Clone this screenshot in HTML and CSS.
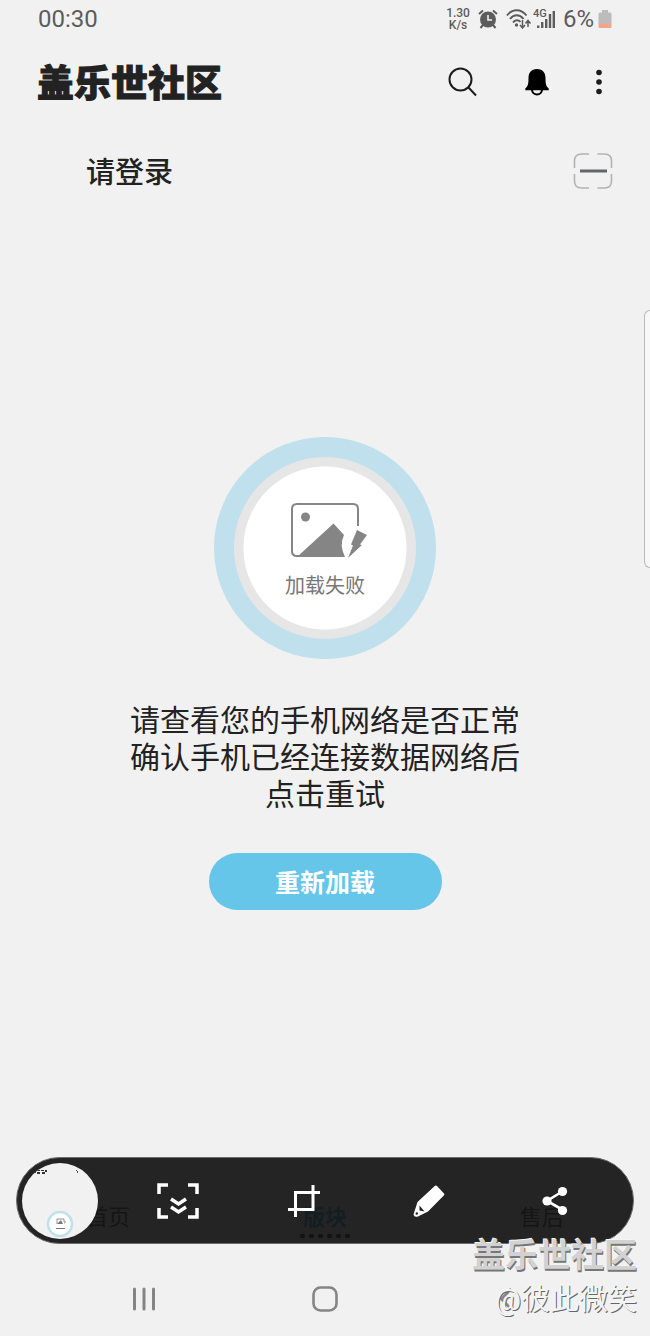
FILE: index.html
```html
<!DOCTYPE html>
<html lang="zh-CN">
<head>
<meta charset="utf-8">
<meta name="viewport" content="width=device-width, initial-scale=1">
<title>盖乐世社区</title>
<link rel="stylesheet" href="styles.css">
</head>
<body>
<div class="screen">
  <div class="status">
    <span class="clock">00:30</span>
    <div class="indicators">
      <span class="speed"><span>1.30</span><span>K/s</span></span>
      <svg class="alarm" width="20" height="20" viewBox="0 0 20 20" fill="none" stroke="#5c5c5c">
        <circle cx="10" cy="10.500" r="8" fill="#5c5c5c" stroke="none"/>
        <path d="M1 5 5 1.500M19 5l-4-3.500M5 16l-2.500 3M15 16l2.500 3" stroke-width="2"/>
        <path d="M10 6v5h4" stroke="#f1f1f1" stroke-width="1.600"/>
      </svg>
      <svg class="wifi" width="26" height="20" viewBox="0 0 26 20" fill="none" stroke="#5c5c5c" stroke-width="2">
        <path d="M1 6.500C6-.5 15-.5 20.500 6.500M4 10c4-5 9.500-5 13.500 0M7 13.500c2-3 5.500-3 7.500-.5"/>
        <circle cx="10.500" cy="16" r="1.700" fill="#5c5c5c" stroke="none"/>
        <path d="M16.500 11v7M14 16l2.500 3 2.500-3M22 18v-6M19.500 14.500 22 11.500l2.500 3" stroke-width="1.500"/>
      </svg>
      <span class="cell">
        <span class="cell-type">4G</span>
        <svg width="22" height="20" viewBox="0 0 22 20" fill="#5c5c5c">
          <path d="M4 16.500h2.400V19H4zM8 13h2.400v6H8zM12 10h2.400v9H12zM15.800 5h2.400v14h-2.400zM19.600 2H22v17h-2.400z"/>
        </svg>
      </span>
      <span class="percent">6%</span>
      <svg width="14" height="20" viewBox="0 0 14 20">
        <path d="M4 1h6v2.500H4zM2 3.500h10q1.500 0 1.500 1.500v10H.5V5Q.5 3.500 2 3.500z" fill="#bcbcbc"/>
        <path d="M.5 14.500h13V18q0 1-1 1h-11q-1 0-1-1z" fill="#f0a58d"/>
      </svg>
    </div>
  </div>

  <header class="header">
    <h1 class="title">盖乐世社区</h1>
    <div class="actions">
      <button class="icon-button" aria-label="搜索">
        <svg width="30" height="30" viewBox="0 0 30 30" fill="none" stroke="#1c1c1c" stroke-width="2">
          <circle cx="12.500" cy="12.500" r="11"/><path d="M20.500 20.500 28 28.500"/>
        </svg>
      </button>
      <button class="icon-button" aria-label="通知">
        <svg width="26" height="30" viewBox="0 0 26 30">
          <circle cx="13" cy="22.500" r="5" fill="none" stroke="#000" stroke-width="2"/>
          <path d="M13 2C7 2 4.500 6 4.500 11c0 6-.5 8-3.200 10.500v1.700h23.400v-1.700C22 19 21.500 17 21.500 11c0-5-2.500-9-8.500-9z" fill="#000"/>
        </svg>
      </button>
      <button class="icon-button" aria-label="更多">
        <svg width="6" height="28" viewBox="0 0 6 28" fill="#1c1c1c">
          <circle cx="3" cy="4.500" r="2.800"/><circle cx="3" cy="14" r="2.800"/><circle cx="3" cy="23.500" r="2.800"/>
        </svg>
      </button>
    </div>
  </header>

  <section class="account">
    <a class="login" href="#login">请登录</a>
    <button class="icon-button" aria-label="扫一扫">
      <svg width="40" height="38" viewBox="0 0 40 38" fill="none" stroke="#b3b3b3" stroke-width="1.600">
        <path d="M1.500 16V9Q1.500 2 8.500 2H16M24.500 2H31.500Q38.500 2 38.500 9v7M38.500 22v7q0 7-7 7h-7M16 36H8.500q-7 0-7-7v-7"/>
        <path d="M7 19h27" stroke="#636568" stroke-width="3"/>
      </svg>
    </button>
  </section>

  <main class="content">
    <div class="badge">
      <svg width="86" height="56" viewBox="-8 0 86 56">
        <path d="M68 24V7q0-5-5-5H7Q2 2 2 7v42q0 5 5 5h3" fill="none" stroke="#858585" stroke-width="2"/>
        <circle cx="15.500" cy="15" r="4.500" fill="#858585"/>
        <path d="M7 55 43.500 21.500 54 33q-5 10 1 22z" fill="#858585"/>
        <path d="M67 28l10 5-7 9.500 2 .5-14 13 5-12.500-2-1z" fill="#858585"/>
      </svg>
      <span class="badge-text">加载失败</span>
    </div>
    <p class="message">请查看您的手机网络是否正常<br>确认手机已经连接数据网络后<br>点击重试</p>
    <button class="reload">重新加载</button>
  </main>

  <div class="bottom">
    <nav class="tabs">
      <a class="tab" href="#home">首页</a>
      <a class="tab active" href="#boards">版块</a>
      <a class="tab" href="#service">售后</a>
    </nav>
    <div class="toolbar">
      <button class="thumb" aria-label="截图预览">
        <svg width="76" height="76" viewBox="0 0 76 76">
          <path d="M12 7h2v3h-2zM15 7h3v1h-3zM15 9h3v2h-3zM19 7h3v1h-3zM20 9h3v2h-3zM23 7h2v2h-2z" fill="#333"/>
          <path d="M54 7l2 2-1 1" fill="none" stroke="#555"/>
          <circle cx="38" cy="61" r="12" fill="#fff" stroke="#bfe0ec" stroke-width="2.500"/>
          <path d="M35 61v-5h7v3" fill="none" stroke="#777" stroke-width=".8"/>
          <path d="M35 61l4-4 2 4zM43 58l1 1-2 2zM34 65h9v1h-9z" fill="#777"/>
        </svg>
      </button>
      <button class="tool" aria-label="滚动截图">
        <svg width="42" height="36" viewBox="0 0 42 36" fill="none" stroke="#fff" stroke-width="3.500">
          <path d="M2 11V2h9M31 2h9v9M40 25v9h-9M11 34H2v-9"/>
          <path d="M14 16l7.500 5 7.500-5M14 24l7.500 5 7.500-5"/>
        </svg>
      </button>
      <button class="tool" aria-label="裁剪">
        <svg width="32" height="32" viewBox="0 0 32 32" fill="none" stroke="#fff" stroke-width="3">
          <path d="M0 24.500h25V0M32 7.500H7.500V32"/>
        </svg>
      </button>
      <button class="tool" aria-label="涂鸦">
        <svg width="32" height="32" viewBox="0 0 32 32">
          <path d="M22 .8q1-.8 2 .2l7 7.500q.8 1-.2 2L15 26.500 5 31.500q-4 1-4.500-2L4.500 17z" fill="#fff"/>
          <path d="M6.500 20.500l5 6-5-1z" fill="#242424"/><circle cx="3.800" cy="28.500" r="1.200" fill="#242424"/>
        </svg>
      </button>
      <button class="tool" aria-label="分享">
        <svg width="26" height="30" viewBox="0 0 26 30" fill="#fff">
          <path d="M21 5 5 15l16 9" fill="none" stroke="#fff" stroke-width="2.600"/>
          <circle cx="20.500" cy="5.500" r="4.600"/><circle cx="5" cy="15" r="4.600"/><circle cx="20.500" cy="24.500" r="4.600"/>
        </svg>
      </button>
    </div>
  </div>

  <div class="system-nav">
    <button class="nav-key" aria-label="最近任务">
      <svg width="24" height="24" viewBox="0 0 24 24" stroke="#858585" stroke-width="3" stroke-linecap="round">
        <path d="M2.500 2v20M12 2v20M21.500 2v20"/>
      </svg>
    </button>
    <button class="nav-key" aria-label="主屏幕">
      <svg width="26" height="26" viewBox="0 0 26 26" fill="none" stroke="#858585" stroke-width="2.600">
        <rect x="1.500" y="1.500" width="23" height="23" rx="7"/>
      </svg>
    </button>
    <button class="nav-key" aria-label="返回">
      <svg width="14" height="24" viewBox="0 0 14 24" fill="none" stroke="#858585" stroke-width="2.600">
        <path d="M12 2 2.500 12 12 22"/>
      </svg>
    </button>
  </div>

  <div class="edge-handle"></div>
  <div class="watermark">
    <span class="mark-name">盖乐世社区</span>
    <span class="mark-user">@彼此微笑</span>
  </div>
</div>
</body>
</html>
```

FILE: styles.css
```css
* {
  box-sizing: border-box;
}

body {
  margin: 0;
  background: #f1f1f1;
  color: #222;
  font-family: Roboto, "Noto Sans CJK SC", sans-serif;
}

button {
  display: flex;
  align-items: center;
  justify-content: center;
  margin: 0;
  padding: 0;
  border: 0;
  background: none;
  font-family: inherit;
  cursor: pointer;
}

svg {
  display: block;
  flex: none;
}

a {
  color: inherit;
  text-decoration: none;
}

.screen {
  position: relative;
  display: flex;
  flex-direction: column;
  min-height: 100vh;
  overflow: hidden;
}

.status {
  display: flex;
  align-items: center;
  justify-content: space-between;
  height: 38px;
  padding: 0 38px;
  color: #5c5c5c;
}

.clock {
  font-size: 24px;
}

.indicators {
  display: flex;
  align-items: center;
}

.speed {
  display: flex;
  flex-direction: column;
  align-items: center;
  margin-right: 8px;
  font-size: 12px;
  font-weight: 500;
  line-height: 12px;
}

.alarm {
  margin-right: 8px;
}

.wifi {
  margin-right: 1px;
}

.cell {
  position: relative;
  margin-right: 8px;
}

.cell-type {
  position: absolute;
  top: -1px;
  left: 0;
  font-size: 11px;
  font-weight: 500;
  line-height: 12px;
}

.percent {
  margin-right: 4px;
  font-size: 24px;
}

.header {
  display: flex;
  align-items: center;
  justify-content: space-between;
  height: 88px;
  padding: 0 48px 0 37px;
}

.title {
  margin: 0;
  padding-top: 6px;
  font-size: 37px;
  font-weight: 900;
  line-height: 44px;
  -webkit-text-stroke: 1px #222;
}

.actions {
  display: flex;
  align-items: center;
  gap: 46px;
}

.account {
  display: flex;
  align-items: center;
  justify-content: space-between;
  height: 90px;
  padding: 0 37px 0 86px;
}

.login {
  padding-top: 4px;
  font-size: 29px;
  font-weight: 500;
  line-height: 40px;
}

.content {
  display: flex;
  flex: 1;
  flex-direction: column;
  align-items: center;
  justify-content: center;
  padding-bottom: 26px;
}

.badge {
  display: flex;
  flex-direction: column;
  align-items: center;
  gap: 14px;
  width: 222px;
  height: 222px;
  padding-top: 45px;
  border: 20px solid #bfe0ec;
  border-radius: 50%;
  background: radial-gradient(circle closest-side, #fff 81px, #e6e6e6 82px);
}

.badge-text {
  color: #777;
  font-size: 20px;
  line-height: 28px;
}

.message {
  margin: 43px 0 40px;
  font-size: 30px;
  line-height: 37px;
  text-align: center;
}

.reload {
  width: 233px;
  height: 57px;
  padding-bottom: 2px;
  border-radius: 29px;
  background: #65c6e9;
  color: #fff;
  font-size: 25px;
  font-weight: 700;
}

.bottom {
  position: relative;
  height: 105px;
}

.tabs {
  display: flex;
  padding-top: 45px;
}

.tab {
  display: flex;
  flex: 1;
  flex-direction: column;
  align-items: center;
  color: #222;
  font-size: 22px;
  line-height: 32px;
}

.active {
  color: #0a9cd6;
  font-weight: 700;
}

.active::after {
  width: 54px;
  height: 4px;
  background: radial-gradient(circle, #000 2px, transparent 3px) 0 0 / 9px 4px;
  content: "";
}

.toolbar {
  position: absolute;
  top: 0;
  right: 16px;
  left: 16px;
  display: flex;
  align-items: center;
  height: 87px;
  padding: 0 15px 0 5px;
  border: 1px solid #6d6d6d;
  border-radius: 44px;
  background: rgba(20, 20, 20, 0.93);
}

.thumb {
  width: 76px;
  height: 76px;
  margin-right: 17px;
  border-radius: 50%;
  background: #f1f1f1;
  overflow: hidden;
}

.tool {
  flex: 1;
  height: 76px;
}

.system-nav {
  display: flex;
  align-items: center;
  height: 74px;
  padding: 0 54px;
}

.nav-key {
  flex: 1;
  height: 48px;
}

.edge-handle {
  position: absolute;
  top: 310px;
  right: 0;
  width: 6px;
  height: 258px;
  border: 1px solid #b9b9b9;
  border-right: 0;
  border-radius: 6px 0 0 6px;
  background: #f8f8f8;
}

.watermark {
  position: absolute;
  right: 13px;
  bottom: 16px;
  display: flex;
  flex-direction: column;
  align-items: flex-end;
  gap: 4px;
  pointer-events: none;
}

.mark-name {
  color: #d2d2d2;
  font-size: 33px;
  font-weight: 700;
  line-height: 40px;
  text-shadow: 1px 2px 0 #777, -1px -1px 0 #f4f4f4;
}

.mark-user {
  color: #f4f4f4;
  font-size: 29px;
  line-height: 40px;
  text-shadow: 1px 1px 0 #666;
}
```
